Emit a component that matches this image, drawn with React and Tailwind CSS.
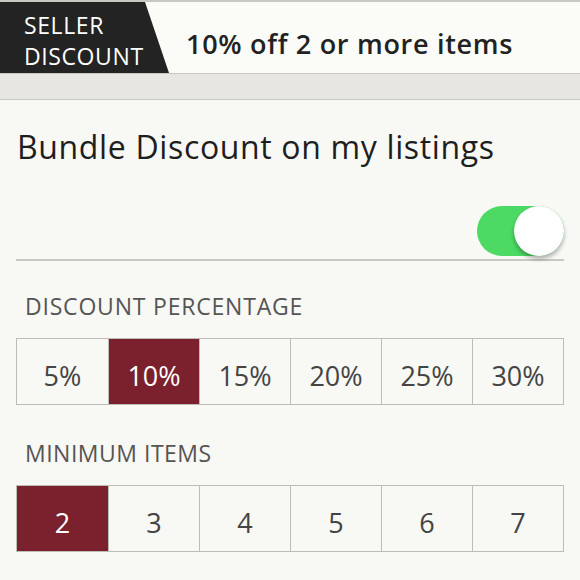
import React from "react";

const pct = ["5%", "10%", "15%", "20%", "25%", "30%"];
const items = ["2", "3", "4", "5", "6", "7"];

function Segments({ values, selected, top }) {
  return (
    <div className={`grid grid-cols-6 border-[1.5px] border-[#bdbdb5] h-[67px] ${top}`}>
      {values.map((v, i) => (
        <div
          key={v}
          className={`flex items-center justify-center pt-[10px] text-[27px] ${i > 0 ? "border-l-[1.5px] border-[#bdbdb5]" : ""} ${
            i === selected ? "bg-[#7b202d] text-white" : "text-[#444]"
          }`}
        >
          {v}
        </div>
      ))}
    </div>
  );
}

export default function App() {
  return (
    <div
      className="w-[580px] h-[580px] overflow-hidden bg-[#f8f8f4] text-[#222]"
      style={{ fontFamily: '"Open Sans", "Liberation Sans", sans-serif' }}
    >
      <div className="h-[73px] border-t-2 border-[#c9c9c3] bg-[#fbfbf8] flex items-stretch">
        <div className="w-[169px] shrink-0 bg-[#232323] [clip-path:polygon(0_0,145px_0,169px_100%,0_100%)] pl-[24px] pt-[8px] text-white text-[23px] leading-[31px] tracking-[0.6px]">
          <div>SELLER</div>
          <div>DISCOUNT</div>
        </div>
        <div className="flex items-center ml-[17px] pt-[14px] text-[27px] font-semibold tracking-[0.7px] text-[#222]">
          10% off 2 or more items
        </div>
      </div>
      <div className="h-[27px] bg-[#e7e6e0] border-y border-[#c8c8c1]" />
      <div className="px-[16px]">
        <div className="mt-[27px] pl-[1px] text-[32px] leading-[40px] tracking-[0.65px] text-[#1e1e1e]">
          Bundle Discount on my listings
        </div>
        <div className="flex justify-end mt-[39px]">
          <div className="relative w-[87px] h-[50px] rounded-full bg-[#4cd964]">
            <div className="absolute right-0 top-0 w-[50px] h-[50px] rounded-full bg-white shadow-[0_3px_4px_rgba(0,0,0,0.3)]" />
          </div>
        </div>
        <div className="mt-[3px] h-[2px] bg-[#c9c9c1]" />
        <div className="mt-[30px] pl-[9px] text-[23px] leading-[30px] tracking-[0.8px] text-[#555]">DISCOUNT PERCENTAGE</div>
        <Segments values={pct} selected={1} top="mt-[17px]" />
        <div className="mt-[33px] pl-[9px] text-[23px] leading-[30px] tracking-[0.5px] text-[#555]">MINIMUM ITEMS</div>
        <Segments values={items} selected={0} top="mt-[17px]" />
      </div>
    </div>
  );
}
